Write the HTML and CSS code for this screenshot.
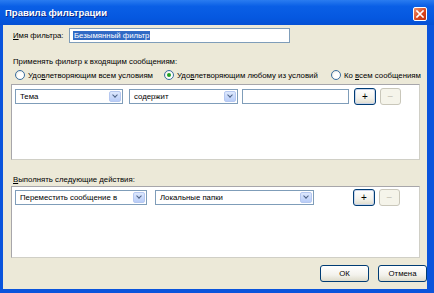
FILE: index.html
```html
<!DOCTYPE html>
<html lang="ru">
<head>
    <meta charset="UTF-8">
    <title>Правила фильтрации</title>
    <link rel="stylesheet" href="styles.css">
</head>
<body>
    <div class="window">
        <div class="titlebar">
            <span class="title">Правила фильтрации</span>
            <button class="close-btn">
                <svg width="8" height="8" viewBox="0 0 8 8"><path d="M1 1L7 7M7 1L1 7" stroke="#fff" stroke-width="1.6" stroke-linecap="square"/></svg>
            </button>
        </div>

        <div class="content">
            <div class="name-row">
                <label class="name-label"><u>И</u>мя фильтра:</label>
                <div class="name-input"><span class="selected">Безымянный фильтр</span></div>
            </div>

            <div class="section-label">Применять фильтр к входящим сообщениям:</div>
            <div class="radio-row">
                <div class="radio-item r1"><span class="radio"></span><span>Удо<u>в</u>летворяющим всем условиям</span></div>
                <div class="radio-item r2"><span class="radio checked"></span><span>Удо<u>в</u>летворяющим любому из условий</span></div>
                <div class="radio-item"><span class="radio"></span><span>Ко <u>в</u>сем сообщениям</span></div>
            </div>

            <div class="list conditions">
                <div class="list-row">
                    <div class="select w-subject"><span>Тема</span><i class="arrow"></i></div>
                    <div class="select w-op"><span>содержит</span><i class="arrow"></i></div>
                    <div class="text-input"></div>
                    <button class="btn small focus">+</button>
                    <button class="btn small disabled">−</button>
                </div>
            </div>

            <div class="section-label actions-label"><u>В</u>ыполнять следующие действия:</div>
            <div class="list actions">
                <div class="list-row">
                    <div class="select w-action"><span>Переместить сообщение в</span><i class="arrow"></i></div>
                    <div class="select w-folder"><span>Локальные папки</span><i class="arrow"></i></div>
                    <button class="btn small focus push">+</button>
                    <button class="btn small disabled">−</button>
                </div>
            </div>

            <div class="footer">
                <button class="btn wide">ОК</button>
                <button class="btn wide">Отмена</button>
            </div>
        </div>
    </div>
</body>
</html>
```

FILE: styles.css
```css
* {
    margin: 0;
    padding: 0;
    box-sizing: border-box;
}

body {
    font-family: 'Liberation Sans', Arial, sans-serif;
    font-size: 7.8px;
    color: #000;
    background-color: #ece9d8;
    white-space: nowrap;
}

.window {
    width: 434px;
    height: 293px;
    display: flex;
    flex-direction: column;
    background-color: #0a54dc;
}

.titlebar {
    height: 25px;
    display: flex;
    justify-content: space-between;
    align-items: center;
    padding: 0 7px 0 5px;
    background: linear-gradient(#2a7cf0 0, #0a5fe6 25%, #0558e0 70%, #0550d4 100%);
}

.title {
    color: white;
    font-weight: bold;
    font-size: 9.5px;
    text-shadow: 1px 1px 0 #0a2a8a;
}

.close-btn {
    width: 14px;
    height: 14px;
    margin-top: 2px;
    border: 1px solid #fff;
    border-radius: 2px;
    background: linear-gradient(135deg, #f0936c, #d8431c 60%, #c03510);
    display: flex;
    align-items: center;
    justify-content: center;
}

.content {
    flex: 1;
    margin: 0 7px 4px 3px;
    padding: 3px 0 7px 8px;
    background-color: #ece9d8;
    display: flex;
    flex-direction: column;
}

.name-row {
    display: flex;
    align-items: center;
    height: 15px;
    padding-left: 2px;
}

.name-label {
    width: 56px;
}

.name-input {
    width: 221px;
    height: 15px;
    background: white;
    border: 1px solid #7f9db9;
    padding: 2px 3px 0;
    line-height: 9px;
}

.selected {
    background-color: #316ac5;
    color: white;
    display: inline-block;
    padding: 0 1px;
}

.section-label {
    margin-top: 12px;
    height: 13px;
    line-height: 13px;
    padding-left: 2px;
}

.radio-row {
    display: flex;
    align-items: center;
    height: 14px;
    padding-left: 4px;
}

.radio-item {
    display: flex;
    align-items: center;
    gap: 3px;
    flex-shrink: 0;
}

.r1 {
    width: 149px;
}

.r2 {
    width: 167px;
}

.radio {
    flex-shrink: 0;
    width: 10px;
    height: 10px;
    border-radius: 50%;
    border: 1px solid #3a6ea0;
    background: radial-gradient(circle at 60% 60%, #ffffff 40%, #dcdcd0);
    display: flex;
    align-items: center;
    justify-content: center;
}

.radio.checked::after {
    content: "";
    width: 4px;
    height: 4px;
    border-radius: 50%;
    background-color: #21a121;
}

.list {
    width: 409px;
    background: white;
    border: 1px solid #a7a6aa;
    border-right-color: #d0cfc6;
    border-bottom-color: #d0cfc6;
    padding: 3px 0 0 3px;
}

.conditions {
    margin-top: 2px;
    height: 76px;
}

.actions-label {
    margin-top: 14px;
    height: 12px;
    line-height: 12px;
}

.actions {
    height: 72px;
    padding-top: 2px;
}

.list-row {
    display: flex;
    align-items: center;
    height: 17px;
}

.select {
    flex-shrink: 0;
    height: 15px;
    border: 1px solid #7f9db9;
    background: white;
    display: flex;
    align-items: center;
    justify-content: space-between;
    padding: 1px 1px 1px 4px;
}

.arrow {
    width: 12px;
    height: 11px;
    border-radius: 2px;
    background: linear-gradient(#dde8fd, #b9cdf8);
    border: 1px solid #b6c8f0;
    position: relative;
}

.arrow::after {
    content: "";
    position: absolute;
    left: 3px;
    top: 1px;
    width: 3px;
    height: 3px;
    border-right: 1.5px solid #4d6185;
    border-bottom: 1.5px solid #4d6185;
    transform: rotate(45deg);
}

.w-subject {
    width: 108px;
    margin-right: 6px;
}

.w-op {
    width: 109px;
    margin-right: 4px;
}

.text-input {
    width: 107px;
    height: 15px;
    border: 1px solid #7f9db9;
    background: white;
    margin-right: 5px;
}

.w-action {
    width: 132px;
    margin-right: 8px;
}

.w-folder {
    width: 159px;
}

.btn {
    flex-shrink: 0;
    font-family: inherit;
    font-size: 7.8px;
    color: #000;
    border: 1px solid #003c74;
    border-radius: 3px;
    background: linear-gradient(#ffffff, #f3f2ec 60%, #dedbcb);
}

.btn.small {
    width: 22px;
    height: 17px;
    font-size: 10px;
    margin-right: 4px;
}

.btn.focus {
    box-shadow: inset 0 0 0 1px #c8d4ea;
}

.btn.disabled {
    width: 21px;
    color: #c4c2b5;
    border-color: #c9c7ba;
    background: #f5f4ea;
}

.push {
    margin-left: 39px;
}

.footer {
    margin-top: 7px;
    display: flex;
    justify-content: flex-end;
    gap: 9px;
}

.btn.wide {
    width: 49px;
    height: 17px;
}
```
